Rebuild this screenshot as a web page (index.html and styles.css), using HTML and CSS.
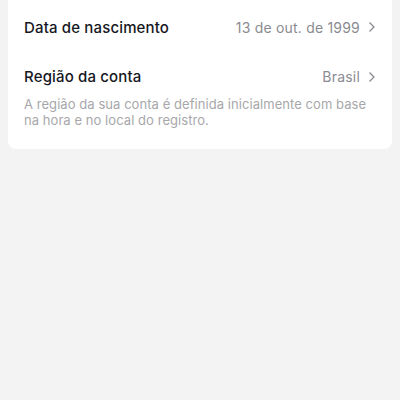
FILE: index.html
```html
<!DOCTYPE html>
<html lang="pt">
<head>
    <meta charset="UTF-8">
    <meta name="viewport" content="width=device-width, initial-scale=1.0">
    <title>Conta</title>
    <link rel="stylesheet" href="styles.css">
</head>
<body>
    <div class="card">
        <div class="row first">
            <span class="label">Data de nascimento</span>
            <span class="value">13 de out. de 1999
                <svg class="chev" width="8" height="12" viewBox="0 0 8 12"><path d="M1.5 1.5 L6 6 L1.5 10.5" fill="none" stroke="#8a8b91" stroke-width="1.3"/></svg>
            </span>
        </div>
        <div class="row second">
            <span class="label">Região da conta</span>
            <span class="value">Brasil
                <svg class="chev" width="8" height="12" viewBox="0 0 8 12"><path d="M1.5 1.5 L6 6 L1.5 10.5" fill="none" stroke="#8a8b91" stroke-width="1.3"/></svg>
            </span>
        </div>
        <p class="note">A região da sua conta é definida inicialmente com base na hora e no local do registro.</p>
    </div>
</body>
</html>
```

FILE: styles.css
```css
body {
    margin: 0;
    background: #f3f3f4;
    font-family: Inter, Roboto, "Liberation Sans", sans-serif;
    height: 400px;
}
.card {
    margin: 0 8px;
    background: #fff;
    border-radius: 0 0 8px 8px;
    padding: 0 16px 21px;
}
.row {
    display: flex;
    justify-content: space-between;
    align-items: center;
}
.first {
    height: 54px;
}
.second {
    padding-top: 14px;
    line-height: 18px;
}
.label {
    font-size: 15px;
    font-weight: 500;
    letter-spacing: 0.15px;
    color: #161823;
}
.value {
    display: flex;
    align-items: center;
    font-size: 14px;
    letter-spacing: 0.2px;
    color: #8a8b91;
}
.chev {
    margin-left: 8px;
}
.note {
    margin: 10px 0 0;
    font-size: 13px;
    line-height: 16px;
    letter-spacing: 0.06px;
    color: #a7a7ab;
}
```
